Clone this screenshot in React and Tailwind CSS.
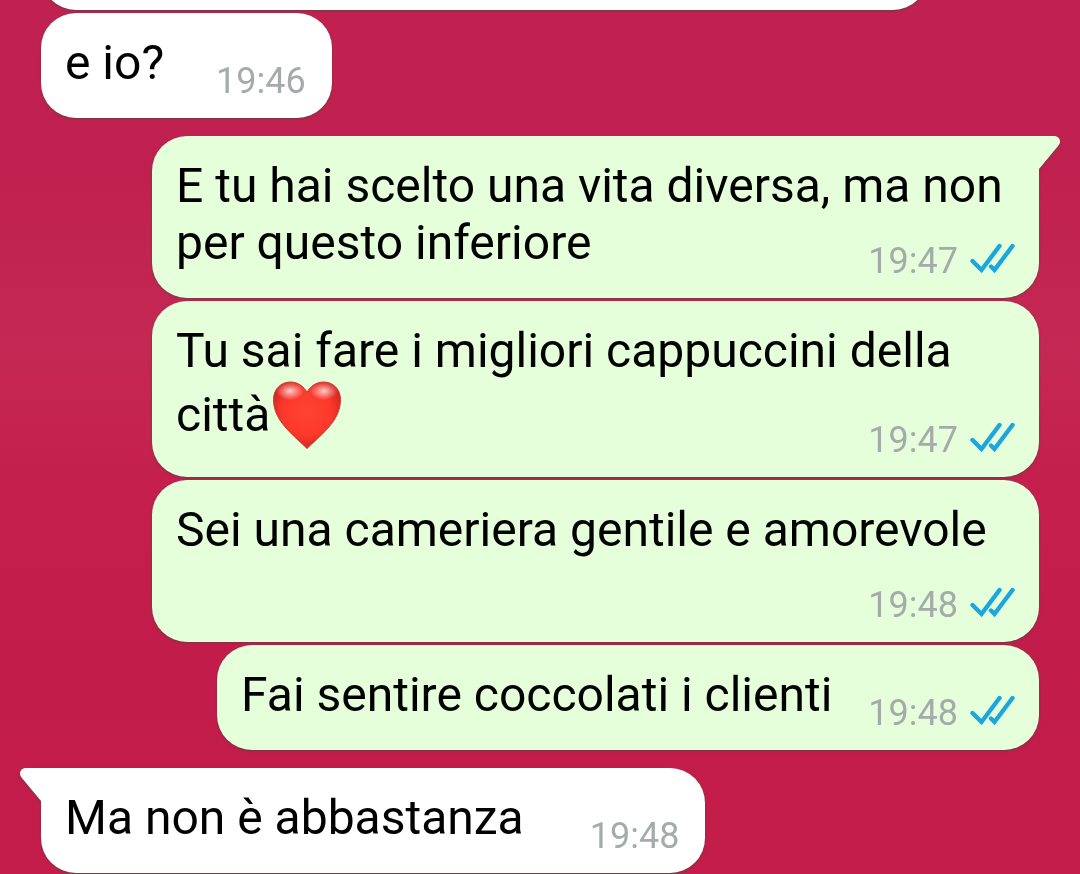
import React from 'react';
import clsx from 'clsx';

const MESSAGES = [
    { id: 1, text: 'e io?', time: '19:46', gap: 'ml-[52px]' },
    { id: 2, out: true, tail: true, text: 'E tu hai scelto una vita diversa, ma non per questo inferiore', time: '19:47', gap: 'ml-9' },
    { id: 3, out: true, text: 'Tu sai fare i migliori cappuccini della città', heart: true, time: '19:47', gap: 'ml-9' },
    { id: 4, out: true, text: 'Sei una cameriera gentile e amorevole', time: '19:48', gap: 'ml-9' },
    { id: 5, out: true, text: 'Fai sentire coccolati i clienti', time: '19:48', gap: 'ml-9' },
    { id: 6, tail: true, text: 'Ma non è abbastanza', time: '19:48', gap: 'ml-[66px]' },
];

const ReadTicks = () => (
    <svg viewBox="0 0 45 36" className="h-9 w-[45px]" fill="none" stroke="#1ca6e0" strokeWidth="4.4" strokeLinecap="round" strokeLinejoin="miter" role="img" aria-label="Letto">
        <path d="M2.500 18 11.500 27 29.500 3" />
        <path d="M21 23.500 24.500 27 42.500 3" />
    </svg>
);

const Heart = () => (
    <svg viewBox="0 0 72 71" className="inline-block h-[71px] w-[72px] align-[-19px]" role="img" aria-label="Cuore rosso">
        <defs>
            <radialGradient id="heart-fill" cx="0.5" cy="0.45" r="0.6">
                <stop offset="0" stopColor="#ff4332" />
                <stop offset="0.6" stopColor="#fc392b" />
                <stop offset="1" stopColor="#cf1f1e" />
            </radialGradient>
            <radialGradient id="heart-shine">
                <stop offset="0" stopColor="#fff" stopOpacity="0.75" />
                <stop offset="0.5" stopColor="#fff" stopOpacity="0.35" />
                <stop offset="1" stopColor="#fff" stopOpacity="0" />
            </radialGradient>
        </defs>
        <path
            d="M37 69.500C31 63.500 24 58 16 49C8 40 3.500 31 3.500 20.500C3.500 10.500 10.500 3 20.500 3C28 3 34 7.500 37 13.500C40 7.500 46 3 53.500 3C63.500 3 70.500 10.500 70.500 20.500C70.500 31 66 40 58 49C50 58 43 63.500 37 69.500Z"
            fill="url(#heart-fill)"
            stroke="#c93a35"
            strokeWidth="1"
        />
        <ellipse cx="20" cy="12" rx="14" ry="9" fill="url(#heart-shine)" />
        <ellipse cx="54" cy="12" rx="14" ry="9" fill="url(#heart-shine)" />
    </svg>
);

const Tail = ({ out }) => (
    <svg
        viewBox="0 0 22 34"
        className={clsx('absolute top-0 h-[34px] w-[22px]', out ? 'left-full -ml-px fill-[#e5ffdb]' : 'right-full -mr-px -scale-x-100 fill-white')}
        aria-hidden="true"
    >
        <path d="M0 0H16C21 0 24 5 20.500 9.500L1 33V34H0Z" />
    </svg>
);

const Bubble = ({ message }) => {
    const { out, tail, text, heart, time, gap } = message;

    return (
        <li className={clsx('flex', out ? 'justify-end pl-[111px]' : 'justify-start pr-[111px]', tail && 'mt-[15px]')}>
            <div
                className={clsx(
                    'relative rounded-[35px] pt-[21px] pb-4 pl-6 drop-shadow-[0_1px_1px_rgba(70,70,60,0.7)]',
                    out ? 'bg-[#e5ffdb] pr-6' : 'bg-white pr-[26px]',
                    tail && (out ? 'rounded-tr-none' : 'rounded-tl-none')
                )}
            >
                {tail && <Tail out={out} />}
                <div className="flow-root text-[48px] leading-[57px] text-black">
                    {text}
                    {heart && <Heart />}
                    {/* Floats beside the last line, or drops below it when there is no room */}
                    <span className={clsx('float-right flex items-center gap-3 text-[36px] leading-[42px] text-[#a5abab]', gap, heart ? 'mt-10' : 'mt-[26px]')}>
                        <time>{time}</time>
                        {out && <ReadTicks />}
                    </span>
                </div>
            </div>
        </li>
    );
};

const App = () => (
    <main className="min-h-screen overflow-hidden bg-[#c21d4b] bg-[linear-gradient(to_bottom,#c02150_0%,#c0204f_18%,#c42853_40%,#c41f4d_56%,#c21c4a_75%,#c41d4b_100%)] px-[41px] pb-px font-['Roboto',sans-serif]">
        {/* End of the previous message, scrolled past the top edge */}
        <div className="-mt-[95px] mr-[111px] h-[105px] rounded-[35px] bg-white drop-shadow-[0_1px_1px_rgba(70,70,60,0.7)]" />
        <ul className="mt-[3px] flex flex-col gap-[3px]">
            {MESSAGES.map((message) => (
                <Bubble key={message.id} message={message} />
            ))}
        </ul>
    </main>
);

export default App;
